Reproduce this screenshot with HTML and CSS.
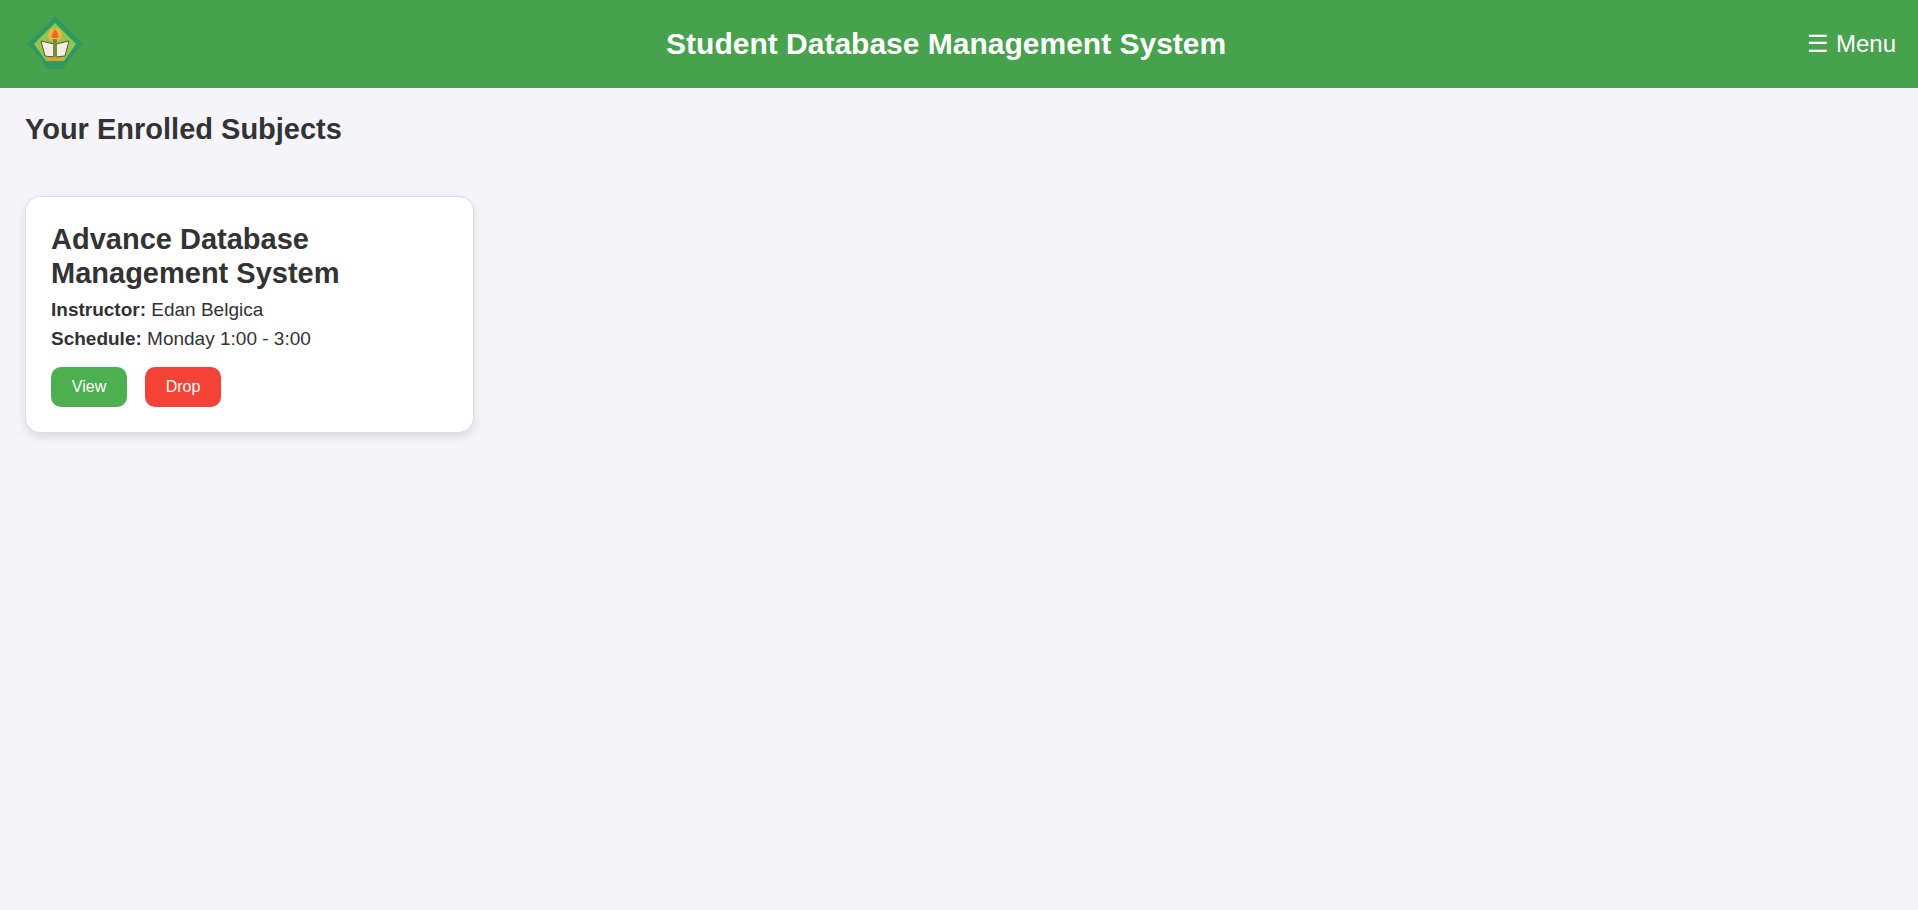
FILE: index.html
```html
<!DOCTYPE html>
<html lang="en">
<head>
<meta charset="utf-8">
<title>Student Database Management System</title>
<link rel="stylesheet" href="styles.css">
</head>
<body>
<header class="topbar">
  <svg class="logo" width="60" height="60" viewBox="0 0 60 60" aria-hidden="true">
    <polygon points="30,2 58,30 44,45 38,55 22,55 16,45 2,30" fill="#2f9a5c"/>
    <polygon points="30,9 51,30 39,47 21,47 9,30" fill="#8cc653"/>
    <circle cx="30" cy="21" r="7" fill="#f0b43c"/>
    <path d="M30 15c3 3 4 6 3 9h-6c-1-3 1-6 3-9z" fill="#e2702a"/>
    <path d="M16 27l13 3v13l-9-1z" fill="#f1eee4" stroke="#7a4a2a"/>
    <path d="M44 27l-13 3v13l9-1z" fill="#f1eee4" stroke="#7a4a2a"/>
    <rect x="28" y="25" width="4" height="17" fill="#7a8a3a"/>
    <path d="M21 44h18l-3 3H24z" fill="#e0a030"/>
  </svg>
  <h1 class="title">Student Database Management System</h1>
  <div class="menu">☰ Menu</div>
</header>
<main class="content">
  <h2 class="heading">Your Enrolled Subjects</h2>
  <section class="grid">
    <article class="card">
      <h3 class="card-title">Advance Database Management System</h3>
      <p class="line"><strong>Instructor:</strong> Edan Belgica</p>
      <p class="line"><strong>Schedule:</strong> Monday 1:00 - 3:00</p>
      <div class="actions">
        <a class="btn btn-view">View</a>
        <a class="btn btn-drop">Drop</a>
      </div>
    </article>
  </section>
</main>
</body>
</html>
```
FILE: styles.css
```css
* { box-sizing: border-box; }
html, body { margin: 0; padding: 0; }
body {
  min-height: 910px;
  background: #f4f4f9;
  color: #333;
  font-family: "Liberation Sans", Arial, sans-serif;
}
.topbar {
  height: 88px;
  padding: 0 22px 0 25px;
  background: #46a24c;
  color: #fff;
  display: flex;
  align-items: center;
  justify-content: space-between;
}
.logo { display: block; flex: none; }
.title { margin: 0; font-size: 30px; font-weight: 700; }
.menu { font-size: 24px; line-height: 28px; }
.content { padding: 25px; }
.heading { margin: 0 0 50px; font-size: 29px; line-height: 33px; font-weight: 700; }
.grid { display: flex; }
.card {
  width: 449px;
  padding: 25px;
  background: #fff;
  border: 1px solid #ddd;
  border-radius: 15px;
  box-shadow: 0 4px 10px rgba(0,0,0,.1);
}
.card-title { margin: 0 0 10px; font-size: 29px; line-height: 34px; font-weight: 700; }
.line { margin: 0 0 10px; font-size: 19px; line-height: 19px; }
.line strong { font-weight: 700; }
.actions { display: flex; gap: 18px; margin-top: 19px; }
.btn {
  width: 76px;
  height: 40px;
  border-radius: 10px;
  color: #fff;
  font-size: 16px;
  display: flex;
  align-items: center;
  justify-content: center;
}
.btn-view { background: #4caf50; }
.btn-drop { background: #f44336; }
```
